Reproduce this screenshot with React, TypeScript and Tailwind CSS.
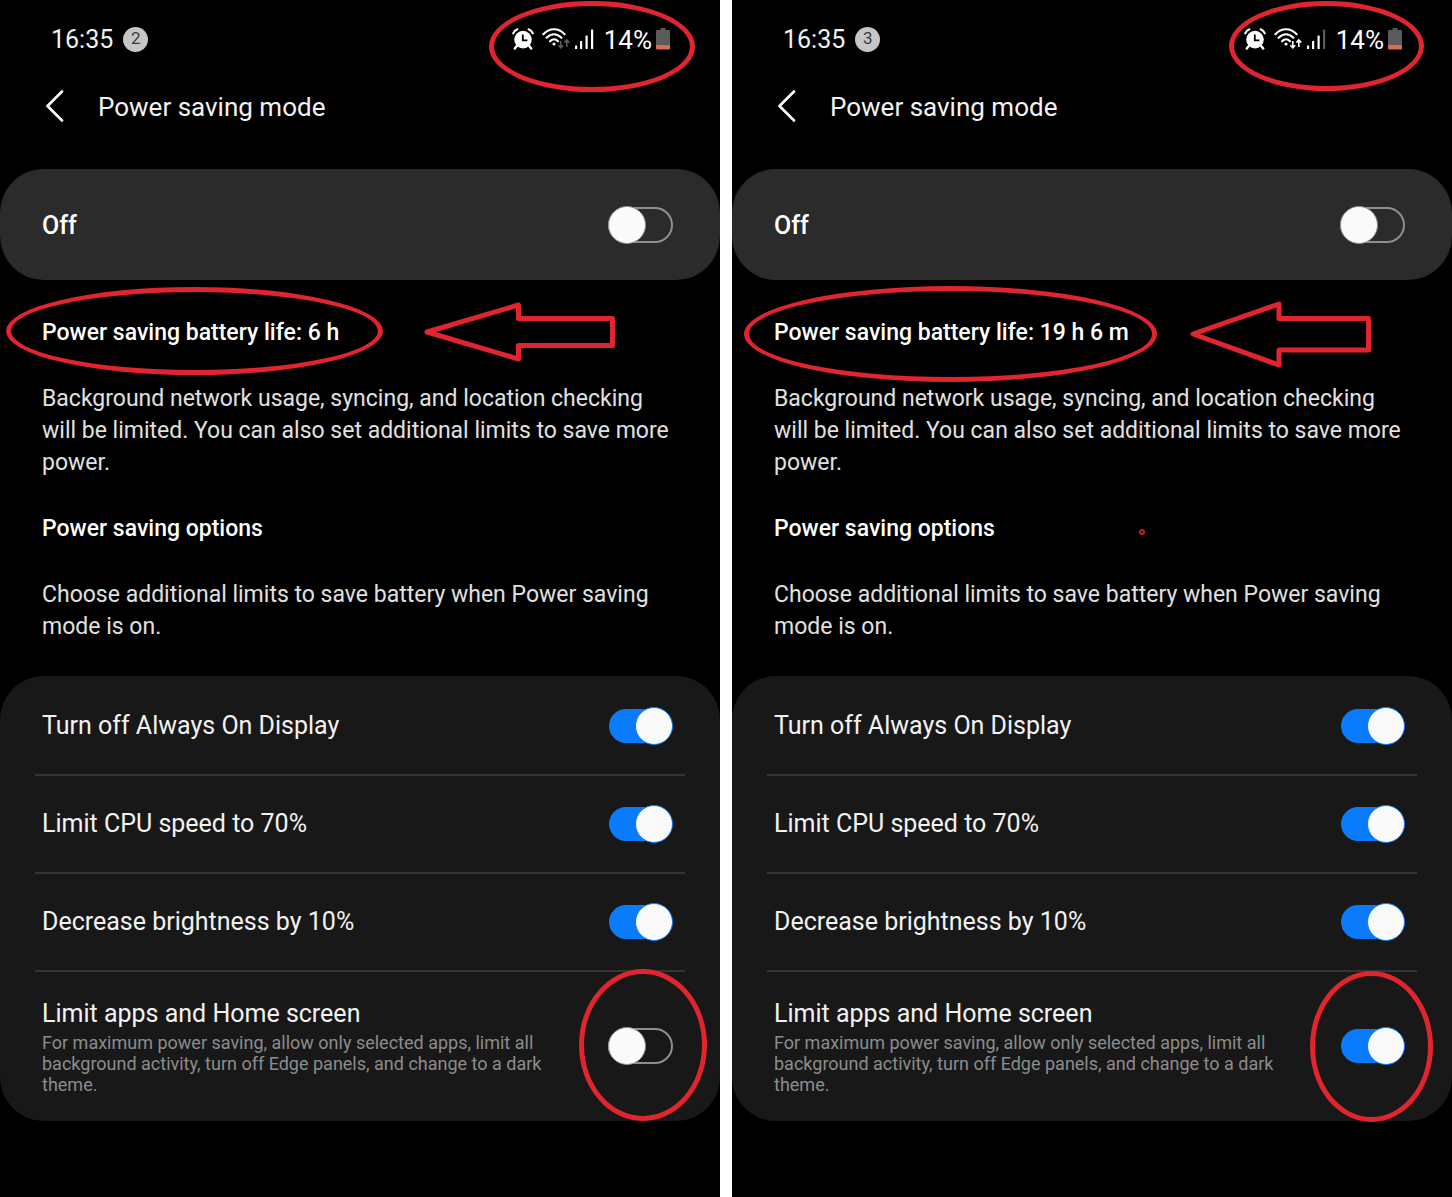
import React, { useId, useState } from 'react';

type Tone = 'text-white' | 'text-[#5c5c5c]';

interface Screen {
  id: string;
  notifications: number;
  batteryLife: string;
  dataTone: Tone;
  lastBarTone: Tone;
  limitApps: boolean;
  statusCircle: string;
  lifeCircle: string;
  limitCircle: string;
  arrow: { className: string; viewBox: string; points: string };
  dot: boolean;
}

const SCREENS: Screen[] = [
  {
    id: 'before',
    notifications: 2,
    batteryLife: '6 h',
    dataTone: 'text-[#5c5c5c]',
    lastBarTone: 'text-white',
    limitApps: false,
    statusCircle: 'top-px right-[25px] h-[91px] w-[206px]',
    lifeCircle: 'top-[7px] left-[6px] h-[88px] w-[377px]',
    limitCircle: '-top-[3px] right-[13px] h-[152px] w-[128px]',
    arrow: {
      className: 'top-[22px] left-[423px] h-[60px] w-[192px]',
      viewBox: '0 0 192 60',
      points: '4,30 95.5,3 95.5,16.5 189.5,16.5 189.5,43.5 95.5,43.5 95.5,57',
    },
    dot: false,
  },
  {
    id: 'after',
    notifications: 3,
    batteryLife: '19 h 6 m',
    dataTone: 'text-white',
    lastBarTone: 'text-[#5c5c5c]',
    limitApps: true,
    statusCircle: 'top-px right-[28px] h-[90px] w-[195px]',
    lifeCircle: 'top-[6px] left-[12px] h-[96px] w-[413px]',
    limitCircle: '-top-px right-[19px] h-[151px] w-[123px]',
    arrow: {
      className: 'top-[21px] left-[457px] h-[67px] w-[182px]',
      viewBox: '0 0 182 67',
      points: '4,33 90,3 90,17.5 179.5,17.5 179.5,49 90,49 90,64',
    },
    dot: true,
  },
];

const OPTIONS = ['Turn off Always On Display', 'Limit CPU speed to 70%', 'Decrease brightness by 10%'];

const Circle: React.FC<{ className: string }> = ({ className }) => (
  <span className={`pointer-events-none absolute z-10 rounded-[50%] border-5 border-[#e0252f] ${className}`} />
);

const AlarmIcon = () => (
  <svg viewBox="0 0 22 22" className="h-[22px] w-[22px]" fill="none" stroke="currentColor">
    <circle cx="11" cy="11.6" r="8.8" fill="currentColor" stroke="none" />
    <path d="M1.2 5.4C2 3.4 3.4 2 5.4 1.2M16.6 1.2c2 .8 3.4 2.2 4.2 4.2" strokeWidth="2" strokeLinecap="round" />
    <path d="M5.2 17.6l-2.4 3M16.8 17.6l2.4 3" strokeWidth="2.4" strokeLinecap="round" />
    <path d="M10.8 6.6v5.8h4.6" stroke="#000" strokeWidth="1.8" />
  </svg>
);

const WifiIcon: React.FC<{ dataTone: Tone }> = ({ dataTone }) => (
  <svg viewBox="0 0 28 22" className="h-[22px] w-7" fill="none" stroke="currentColor" strokeLinecap="round">
    <path d="M1.4 6.2C7.6-.4 16.4-.4 22.6 6.2" strokeWidth="2.1" />
    <path d="M4.6 9.8c4.6-4.8 10.2-4.8 14.8 0" strokeWidth="2.1" />
    <path d="M8 13.2c2.6-2.6 5.6-2.6 8 0" strokeWidth="2.1" />
    <circle cx="12" cy="16" r="1.6" fill="currentColor" stroke="none" />
    <g className={dataTone} strokeWidth="1.6" strokeLinecap="butt">
      <path d="M18.8 13v6.4M16.4 17.2l2.4 2.6 2.4-2.6" />
      <path d="M24.8 19v-6.4M22.4 14.6l2.4-2.6 2.4 2.6" />
    </g>
  </svg>
);

const SignalIcon: React.FC<{ lastBarTone: Tone }> = ({ lastBarTone }) => (
  <svg viewBox="0 0 20 22" className="h-[22px] w-5" fill="currentColor">
    <rect x="1" y="17.5" width="2.2" height="3.5" rx=".6" />
    <rect x="6" y="13" width="2.2" height="8" rx=".6" />
    <rect x="11.5" y="7.5" width="2.2" height="13.5" rx=".6" />
    <rect x="17" y="1.5" width="2.2" height="19.5" rx=".6" className={lastBarTone} />
  </svg>
);

const BatteryIcon = () => (
  <svg viewBox="0 0 14 22" className="h-[22px] w-3.5">
    <path d="M4.5 0h5v2H13a1 1 0 0 1 1 1v14.5H0V3a1 1 0 0 1 1-1h3.5z" fill="#5b5b5b" />
    <path d="M0 17h14v3.5a1 1 0 0 1-1 1H1a1 1 0 0 1-1-1z" fill="#e0694f" />
  </svg>
);

const Switch: React.FC<{ id: string; defaultChecked?: boolean }> = ({ id, defaultChecked = false }) => {
  const [checked, setChecked] = useState(defaultChecked);

  return (
    <span className="relative h-[38px] w-[66px] shrink-0">
      <span
        className={`absolute rounded-full ${
          checked
            ? 'inset-y-[2px] right-[2px] left-[2px] bg-[#0a7cfb]'
            : 'inset-y-px right-0 left-px border-2 border-[#8f8f8f]'
        }`}
      />
      <span
        className={`absolute size-[38px] rounded-full bg-[#fafafa] ${
          checked ? 'right-0 border border-[#0a7cfb]' : 'left-px border border-[#8f8f8f]'
        }`}
      />
      <input
        id={id}
        type="checkbox"
        role="switch"
        checked={checked}
        onChange={(e) => setChecked(e.target.checked)}
        className="absolute inset-0 size-full cursor-pointer appearance-none rounded-full"
      />
    </span>
  );
};

const PowerSavingScreen: React.FC<{ screen: Screen }> = ({ screen }) => {
  const uid = useId();

  return (
    <section className="relative min-w-0 flex-1 bg-black pb-[76px] text-[#f2f2f2]">
      <div className="flex h-[78px] items-center justify-between pr-[50px] pl-[51px]">
        <div className="flex items-center gap-2.5 text-[25px]">
          <span className="pt-0.5">16:35</span>
          <span className="flex size-[25px] items-center justify-center rounded-full bg-[#c6c6c6] text-[17px] text-[#3a3a3a]">
            {screen.notifications}
          </span>
        </div>
        <div className="flex items-center text-white">
          <AlarmIcon />
          <span className="w-2" />
          <WifiIcon dataTone={screen.dataTone} />
          <span className="w-1" />
          <SignalIcon lastBarTone={screen.lastBarTone} />
          <span className="pt-0.5 pr-1 pl-2.5 text-[26px]">14%</span>
          <BatteryIcon />
        </div>
        <Circle className={screen.statusCircle} />
      </div>

      <header className="flex h-[91px] items-start pl-[45px]">
        <button type="button" aria-label="Back" className="mt-3 mr-[33px]">
          <svg viewBox="0 0 20 32" className="h-8 w-5" fill="none" stroke="#fff" strokeWidth="2.6" strokeLinecap="round">
            <path d="M17 1.5 2.5 16 17 30.5" strokeLinejoin="round" />
          </svg>
        </button>
        <h1 className="mt-[13px] text-[26px] leading-8">Power saving mode</h1>
      </header>

      <div className="flex h-[111px] items-center justify-between rounded-[44px] bg-[#2b2b2b] pr-[47px] pl-[42px]">
        <label htmlFor={`${uid}-main`} className="pt-0.5 text-[25px] font-medium text-white">
          Off
        </label>
        <Switch id={`${uid}-main`} />
      </div>

      <div className="relative px-[42px] pt-[37px] text-[23px] leading-8">
        <h2 className="font-medium text-white">Power saving battery life: {screen.batteryLife}</h2>
        <Circle className={screen.lifeCircle} />
        <svg
          viewBox={screen.arrow.viewBox}
          className={`pointer-events-none absolute ${screen.arrow.className}`}
          fill="none"
          stroke="#e0252f"
          strokeWidth="5"
          strokeLinejoin="round"
        >
          <polygon points={screen.arrow.points} />
        </svg>
        <p className="mt-[34px] text-[#e0e0e0]">
          Background network usage, syncing, and location checking will be limited. You can also set additional limits
          to save more power.
        </p>
        <h2 className="mt-[34px] font-medium text-white">Power saving options</h2>
        {screen.dot && <span className="absolute top-[249px] left-[407px] size-1.5 rounded-full border-2 border-[#b8232c]" />}
        <p className="mt-[34px] text-[#e0e0e0]">
          Choose additional limits to save battery when Power saving mode is on.
        </p>
      </div>

      <ul className="mt-[33px] rounded-[44px] bg-[#181818] px-[35px] pt-0.5">
        {OPTIONS.map((option, i) => (
          <li
            key={option}
            className="flex h-[98px] items-center justify-between border-b-2 border-[#343434] pr-3 pl-[7px]"
          >
            <label htmlFor={`${uid}-${i}`} className="text-[25px]">
              {option}
            </label>
            <Switch id={`${uid}-${i}`} defaultChecked />
          </li>
        ))}
        <li className="relative -mx-[35px] flex items-center justify-between pt-6 pr-[47px] pb-[26px] pl-[42px]">
          <div className="max-w-[520px]">
            <label htmlFor={`${uid}-apps`} className="block text-[25px] leading-9">
              Limit apps and Home screen
            </label>
            <p className="text-[18px] leading-[21px] text-[#8c8c8c]">
              For maximum power saving, allow only selected apps, limit all background activity, turn off Edge panels,
              and change to a dark theme.
            </p>
          </div>
          <Switch id={`${uid}-apps`} defaultChecked={screen.limitApps} />
          <Circle className={screen.limitCircle} />
        </li>
      </ul>
    </section>
  );
};

export default function App() {
  return (
    <main className="flex min-h-screen gap-3 bg-white font-['Roboto','Noto_Sans',sans-serif]">
      {SCREENS.map((screen) => (
        <PowerSavingScreen key={screen.id} screen={screen} />
      ))}
    </main>
  );
}
